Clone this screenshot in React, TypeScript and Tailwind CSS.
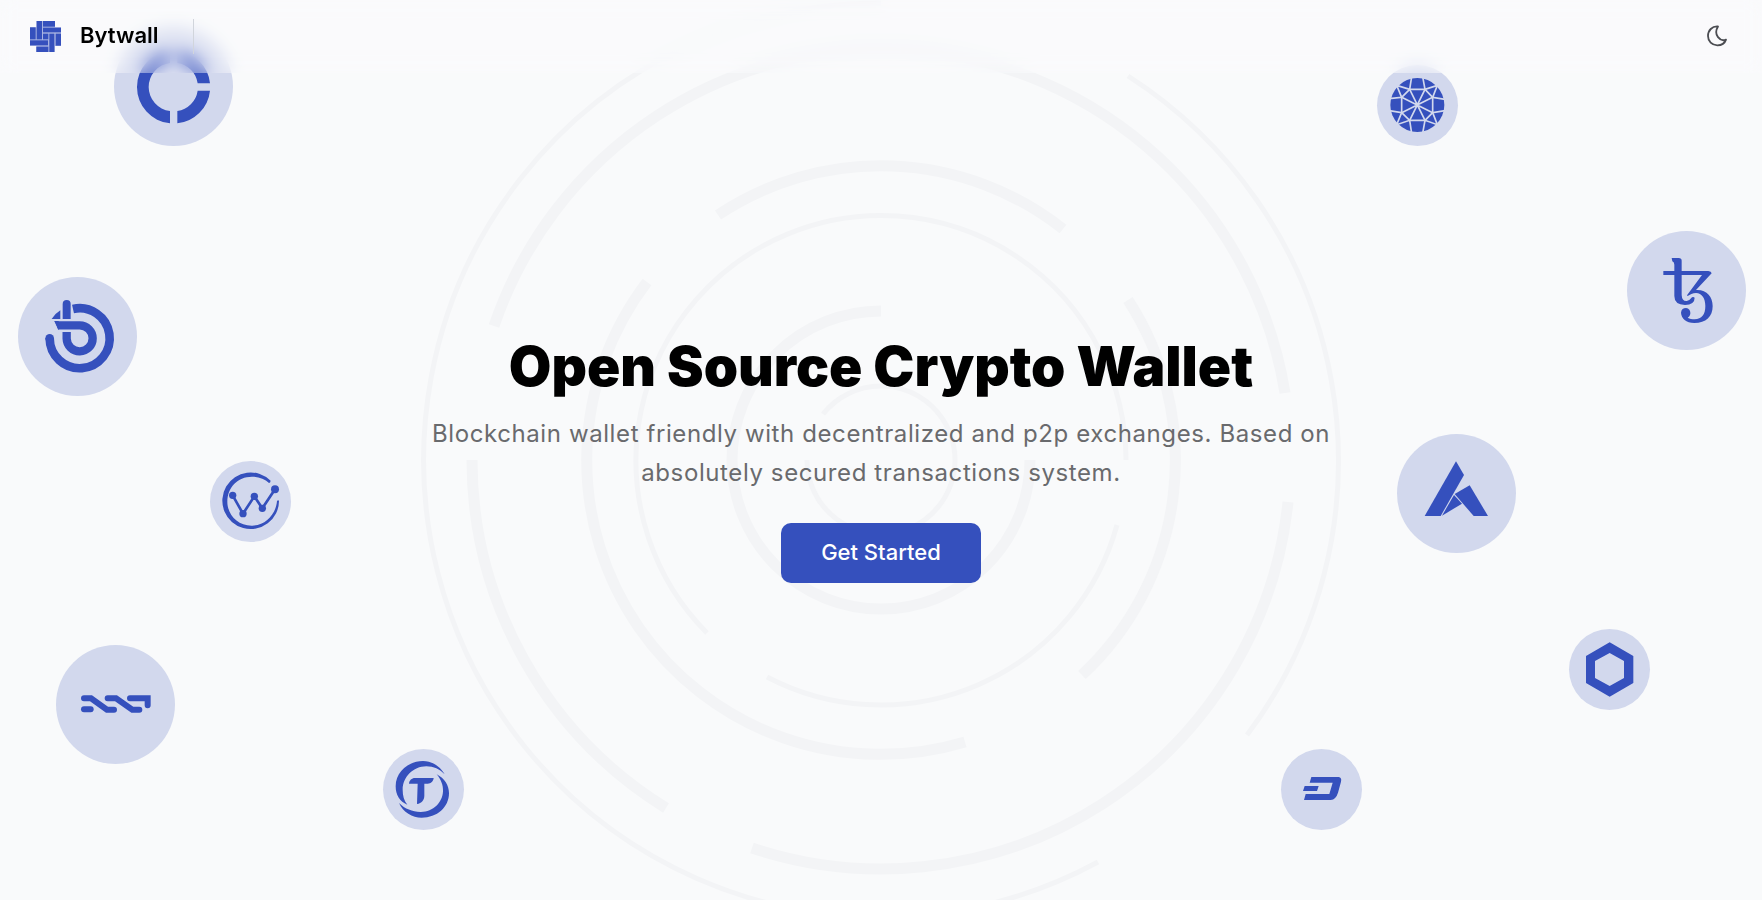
import type { ReactNode } from "react";

type Coin = {
  name: string;
  position: string;
  viewBox: string;
  art: ReactNode;
};

const large = "size-[119px]";
const small = "size-[81px]";

const coins: Coin[] = [
  {
    name: "Coin ring",
    position: `left-[114px] top-[27px] ${large}`,
    viewBox: "0 0 357 357",
    art: (
      <>
        <path d="M168 71A109.500 109.500 0 0 0 168 289V252A72.500 72.500 0 0 1 168 108Z" />
        <path d="M190 71A109.500 109.500 0 0 1 288 169H251A72.500 72.500 0 0 0 190 108Z" />
        <path d="M190 289A109.500 109.500 0 0 0 288 191H251A72.500 72.500 0 0 1 190 252Z" />
      </>
    ),
  },
  {
    name: "Looped b",
    position: `left-[18px] top-[277px] ${large}`,
    viewBox: "54 51 357 357",
    art: (
      <>
        <path d="M149 235A90 90 0 1 0 219 147" fill="none" stroke="currentColor" strokeWidth="26" />
        <circle cx="149" cy="235" r="13" />
        <path d="M200 216V236A39 39 0 1 0 239 196H172" fill="none" stroke="currentColor" strokeWidth="25" />
        <path d="M162 183H176V209H174Z" />
        <path d="M150 181H161L175 211H150Z" fill="#d2d8ed" />
        <path d="M188 177V132A12 12 0 0 1 212 132V177Z" />
        <path d="M155 177Q166 160 181 151V177Z" />
      </>
    ),
  },
  {
    name: "Node wave",
    position: `left-[210px] top-[461px] ${small}`,
    viewBox: "0 0 243 243",
    art: (
      <>
        <path d="M182 59A85 85 0 1 0 207 120Q205 116 201 120C198 160 165 195 125 194C82 194 52 160 52 122C52 80 82 47 126 47C147 47 164 54 177 66Q181 66 182 59Z" />
        <path d="M68 103L99 158L133 106L157 142L195 85" fill="none" stroke="currentColor" strokeWidth="8" />
        <circle cx="68" cy="103" r="11" />
        <circle cx="99" cy="158" r="11" />
        <circle cx="133" cy="106" r="11" />
        <circle cx="157" cy="142" r="11" />
        <circle cx="195" cy="85" r="12" />
      </>
    ),
  },
  {
    name: "Nxt",
    position: `left-[56px] top-[645px] ${large}`,
    viewBox: "0 0 357 357",
    art: (
      <g fill="none" stroke="currentColor" strokeWidth="18" strokeLinecap="round">
        <path d="M84 193H104" />
        <path d="M84 160H105L153 194H174" />
        <path d="M155 160H180L229 194H250" />
        <path d="M222 160H275V181" />
      </g>
    ),
  },
  {
    name: "Trust",
    position: `left-[383px] top-[749px] ${small}`,
    viewBox: "0 0 243 243",
    art: (
      <>
        <path d="M185 76C170 50 145 36 120 36C75 36 38 70 38 112C38 138 50 158 73 167C63 155 59 140 59 122C59 85 90 52 130 52C152 52 170 60 185 76Z" />
        <path d="M48 162C60 190 88 206 116 206C162 206 198 175 198 132C198 110 185 88 161 76C173 90 181 108 180 127C179 160 150 190 112 189C88 188 66 180 48 162Z" />
        <path d="M78 104C79 94 86 87 96 87H152C151 97 144 104 134 104H124V140C124 153 116 163 102 165L104 104Z" />
      </>
    ),
  },
  {
    name: "Faceted sphere",
    position: `right-[304px] top-[65px] ${small}`,
    viewBox: "51 195 243 243",
    art: (
      <>
        <circle cx="172" cy="315" r="81" />
        <g fill="none" stroke="#d2d8ed" strokeWidth="5">
          <path d="M149 268H195L218 292V338L195 361H149L125 338V292Z" />
          <path d="M149 268L195 361M195 268L149 361M218 292L125 338M218 338L125 292" />
          <path d="M155 230L149 268L110 256L125 292L88 296" />
          <path d="M188 230L195 268L232 256L218 292L255 298" />
          <path d="M155 400L149 361L110 374L125 338L88 332" />
          <path d="M188 400L195 361L232 374L218 338L255 332" />
        </g>
      </>
    ),
  },
  {
    name: "Tezos",
    position: `right-[16px] top-[231px] ${large}`,
    viewBox: "741 33 357 357",
    art: (
      <>
        <path d="M875 114H896Q905 115 905 122V225Q906 244 920 243Q930 241 936 232Q940 229 944 233Q944 254 915 255Q883 254 883 228V134Q883 126 877 124Z" />
        <path d="M850 153H985Q994 154 995 160L948 210C980 208 998 230 998 258C998 290 978 309 943 309C918 309 904 295 903 278C904 268 910 264 918 264C927 265 932 272 931 281C930 287 927 290 923 293C929 297 936 298 944 298C965 297 976 284 976 258C976 235 966 220 948 219C938 219 930 224 923 228L921 226L966 165H850Z" />
      </>
    ),
  },
  {
    name: "Ark",
    position: `right-[246px] top-[434px] ${large}`,
    viewBox: "51 642 357 357",
    art: (
      <>
        <path d="M228 724L252 765L182 888H134Z" />
        <path d="M269 796L324 888H281L224 822Z" />
        <path d="M222 825L246 851L186 887Z" />
      </>
    ),
  },
  {
    name: "Chainlink",
    position: `right-[112px] top-[629px] ${small}`,
    viewBox: "927 57 243 243",
    art: (
      <path
        fillRule="evenodd"
        d="M1049 97L1120 138V219L1049 260L978 219V138ZM1049 129L1005 153V204L1049 228L1092 204V153Z"
      />
    ),
  },
  {
    name: "Dash",
    position: `right-[400px] top-[749px] ${small}`,
    viewBox: "63 417 243 243",
    art: (
      <>
        <path d="M154 501H236Q246 503 243 515L234 548Q228 568 212 570H132L137 552H208L218 518H149Z" />
        <path d="M134 528H176L171 543H129Z" />
      </>
    ),
  },
];

const thinArcs = [
  "M-58 -46A74 74 0 1 1 -74 0",
  "M-174 173A245 245 0 1 1 245 0",
  "M236 65A245 245 0 0 1 -114 217",
  "M0 -457A457 457 0 1 0 217 402",
  "M247 -384A457 457 0 0 1 366 275",
];

const thickArcs = [
  "M149 0A149 149 0 1 1 0 -149",
  "M-163 -245A294 294 0 0 1 182 -231",
  "M-234 -178A294 294 0 0 0 84 282",
  "M247 -160A294 294 0 0 1 201 215",
  "M-387 -134A409 409 0 0 1 404 -67",
  "M-409 0A409 409 0 0 0 -215 348",
  "M407 42A409 409 0 0 1 -129 388",
];

function Rings() {
  return (
    <svg
      viewBox="-470 -470 940 940"
      fill="none"
      stroke="#f3f4f6"
      className="absolute left-1/2 top-[460px] size-[940px] max-w-none -translate-x-1/2 -translate-y-1/2"
      aria-hidden="true"
    >
      <g strokeWidth="5">
        {thinArcs.map((d) => (
          <path key={d} d={d} />
        ))}
      </g>
      <g strokeWidth="11">
        {thickArcs.map((d) => (
          <path key={d} d={d} />
        ))}
      </g>
    </svg>
  );
}

function Logo() {
  return (
    <svg viewBox="0 0 93 93" className="size-[31px]" aria-hidden="true">
      <path d="M19 0H75V19H93V75H75V93H19V75H0V19H19Z" fill="#a9b4e2" />
      <g fill="#3550bd">
        <path d="M20 0H36V55H20Z" />
        <path d="M39 0H75V17H39Z" />
        <path d="M39 20H93V34H39Z" />
        <path d="M0 19H17V55H0Z" />
        <path d="M39 38H55V55H39Z" />
        <path d="M58 38H73V93H58Z" />
        <path d="M77 38H93V74H77Z" />
        <path d="M0 58H54V73H0Z" />
        <path d="M19 77H55V93H19Z" />
      </g>
    </svg>
  );
}

function Header() {
  return (
    <header className="fixed inset-x-0 top-0 z-20">
      {/* taller than the bar, so the blur also picks up what sits just below it */}
      <div className="pointer-events-none absolute inset-x-0 top-0 h-[113px] bg-[#fcfdff]/30 backdrop-blur-sm [clip-path:inset(0_0_40px_0)]" />
      <div className="relative flex h-[73px] items-center justify-between px-[30px] pb-px">
        <div className="flex items-center">
          <a href="#" className="flex items-center gap-[19px] text-[22px] leading-8 font-semibold text-black">
            <Logo />
            <span className="pb-0.5">Bytwall</span>
          </a>
          <span className="ml-[34px] h-[35px] w-px bg-gray-300" />
        </div>
        <button type="button" aria-label="Toggle dark mode" className="mr-1 cursor-pointer text-[#4b4d52]">
          <svg viewBox="0 0 24 24" className="size-6" fill="none" stroke="currentColor" strokeWidth="1.800" strokeLinejoin="round" aria-hidden="true">
            <path d="M14 2.500C8 2 4 6.500 4 12C4 17.300 8 21.300 13.300 21.300C17.600 21.300 20.800 19.200 22 15.600C16.500 18 8.800 11 14 2.500Z" />
          </svg>
        </button>
      </div>
    </header>
  );
}

export default function App() {
  return (
    <div className="min-h-screen bg-[#f9fafb] font-['Inter',sans-serif]">
      <Header />
      <main className="relative flex min-h-screen flex-col items-center overflow-hidden px-6 pt-[334px]">
        <Rings />
        {coins.map((coin) => (
          <div
            key={coin.name}
            className={`absolute overflow-hidden rounded-full bg-[#d2d8ed] text-[#3550bd] ${coin.position}`}
          >
            <svg viewBox={coin.viewBox} className="size-full" fill="currentColor" role="img" aria-label={coin.name}>
              {coin.art}
            </svg>
          </div>
        ))}
        <section className="relative flex max-w-[960px] flex-col items-center text-center">
          <h1 className="text-[55px] leading-[64px] font-black text-black">Open Source Crypto Wallet</h1>
          <p className="mt-4 text-2xl leading-[39px] tracking-wide text-[#696a6d]">
            Blockchain wallet friendly with decentralized and p2p exchanges. Based on absolutely secured transactions
            system.
          </p>
          <button
            type="button"
            className="mt-[31px] h-[60px] cursor-pointer rounded-[10px] bg-[#3550bd] px-10 pb-0.5 text-[22px] font-medium text-white"
          >
            Get Started
          </button>
        </section>
      </main>
    </div>
  );
}
